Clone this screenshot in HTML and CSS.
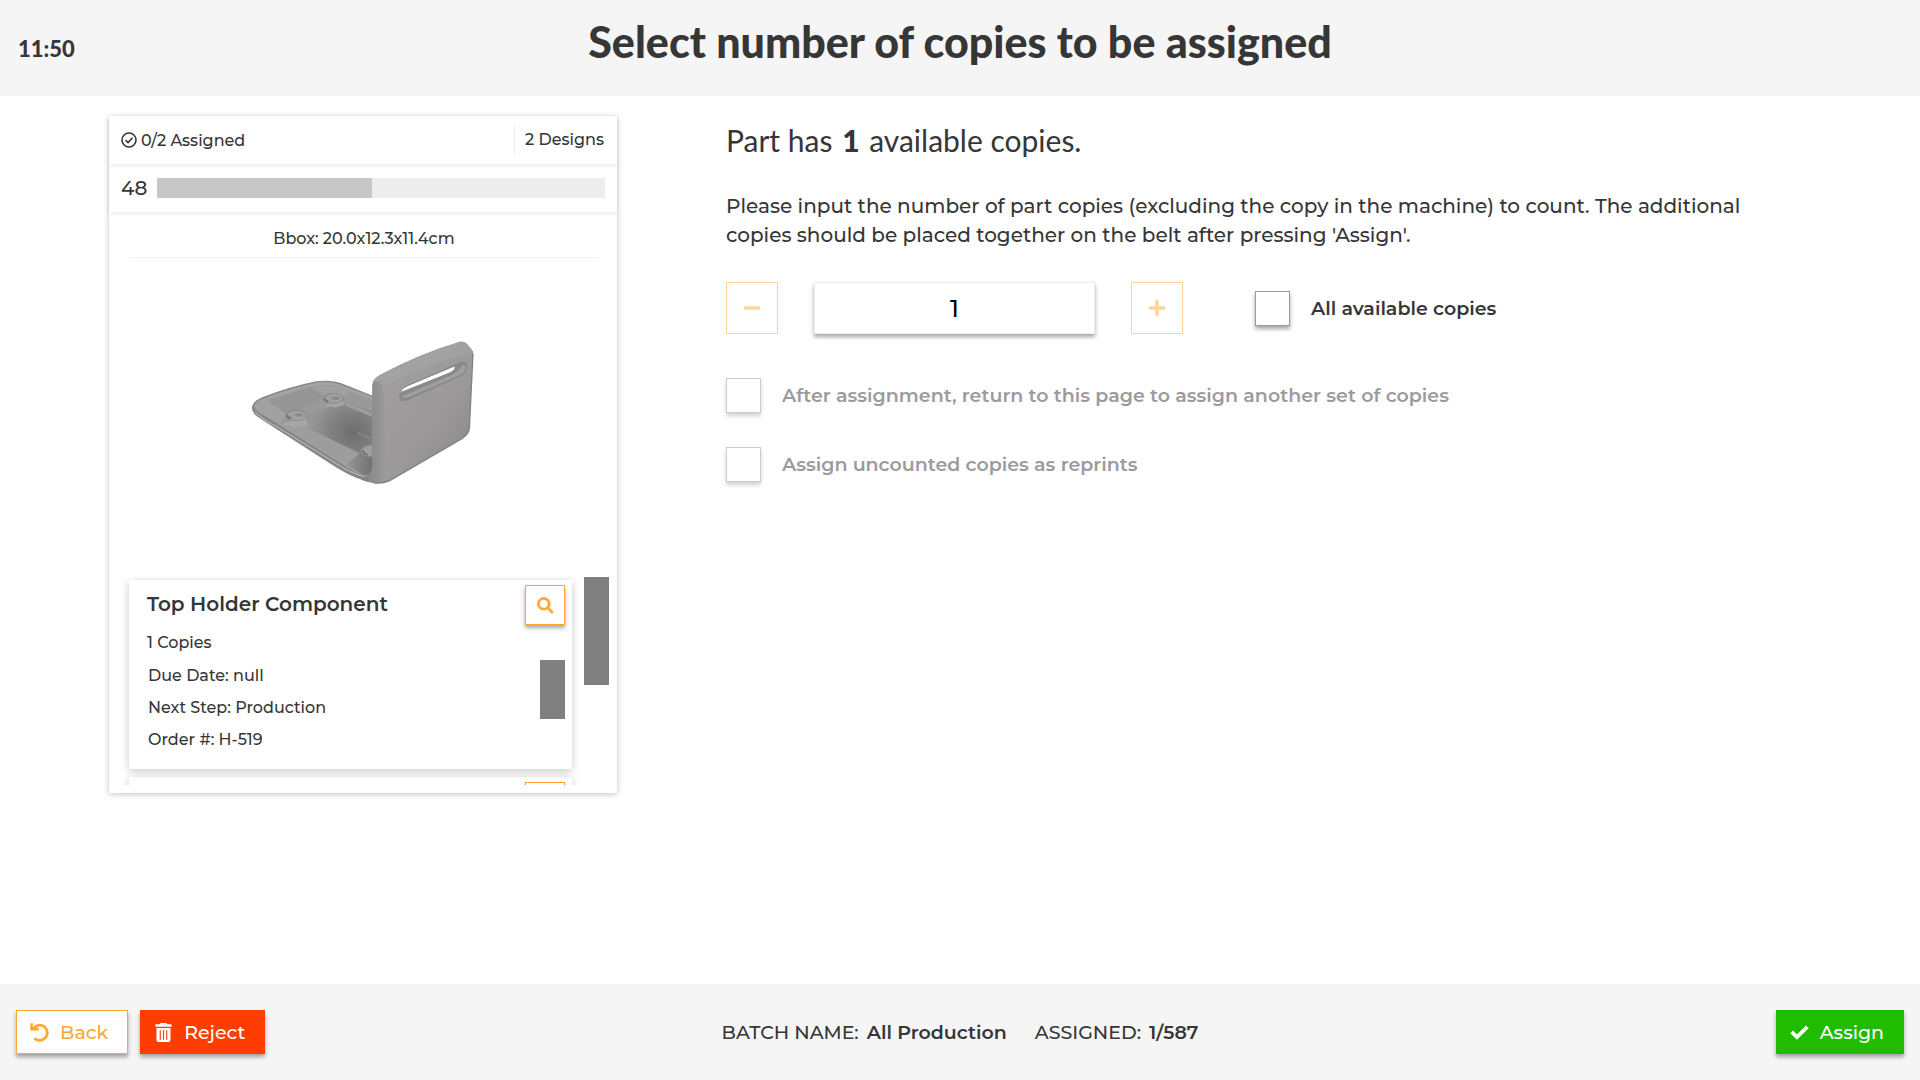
FILE: index.html
```html
<!DOCTYPE html>
<html lang="en">
  <head>
    <meta charset="UTF-8" />
    <meta name="viewport" content="width=device-width, initial-scale=1.0" />
    <title>Assign copies</title>
    <link rel="stylesheet" href="styles.css">
  </head>
  <body>
    <header class="header">
      <div class="clock">11:50</div>
      <h1 class="page-title">Select number of copies to be assigned</h1>
    </header>

    <main class="main">
      <section class="part-card">
        <div class="part-head">
          <div class="assigned">
            <svg class="check-icon" viewBox="0 0 16 16">
              <circle cx="8" cy="8" r="7" />
              <path d="M4.5 8.2 7 10.6 11.5 5.8" />
            </svg>
            <span>0/2 Assigned</span>
          </div>
          <div class="designs">2 Designs</div>
        </div>
        <div class="progress-row">
          <span>48</span>
          <div class="progress"><div class="progress-fill" style="width: 48%"></div></div>
        </div>
        <div class="part-body">
          <div class="bbox">Bbox: 20.0x12.3x11.4cm</div>
          <div class="preview">
            <svg class="preview-image" viewBox="0 0 800 540">
              <defs>
                <linearGradient id="face" x1="0" y1="0" x2="1" y2="1">
                  <stop offset="0" stop-color="#a3a1a1" />
                  <stop offset="0.6" stop-color="#9b9999" />
                  <stop offset="1" stop-color="#858383" />
                </linearGradient>
                <linearGradient id="bend" x1="0" x2="1">
                  <stop offset="0" stop-color="#7f7f7f" />
                  <stop offset="1" stop-color="#9c9a9a" />
                </linearGradient>
                <radialGradient id="shade" cx="0.72" cy="0.5" r="0.65">
                  <stop offset="0" stop-color="#6c6d6c" />
                  <stop offset="0.5" stop-color="#7f807f" />
                  <stop offset="1" stop-color="#979797" />
                </radialGradient>
                <linearGradient id="corner" x1="0" x2="1">
                  <stop offset="0" stop-color="#969696" />
                  <stop offset="1" stop-color="#6f706f" />
                </linearGradient>
              </defs>
              <!-- base plate -->
              <path fill="#858585" d="M67 262Q68 245 98 232Q180 200 260 184Q305 178 335 190L440 232V480L400 480Q360 470 300 430L90 295Q66 280 67 262Z" />
              <path fill="#a3a3a3" d="M74 258Q76 245 105 234Q190 202 265 187Q300 183 328 192L436 234V470Q400 470 370 452L110 290Q76 275 74 258Z" />
              <path fill="#999" d="M92 256Q150 225 240 201Q300 190 330 202L430 240V464L400 466L350 434L150 310Z" />
              <path fill="#a1a1a1" d="M110 240L170 282L150 312L84 268Z" />
              <path fill="#959595" d="M115 240L240 204L285 235L190 270L165 280Z" />
              <path fill="url(#shade)" d="M232 285L345 245L430 275V395L370 430L225 325Z" />
              <path fill="#a0a0a0" d="M245 203L325 194L360 213L340 232L285 225Z" />
              <path fill="#9d9d9d" d="M340 243L430 280V292L350 258ZM150 312L222 318L390 400L350 434Z" />
              <path fill="url(#corner)" d="M350 434L395 398H430V464L400 466Z" />
              <g fill="#9e9e9e" stroke="#868686" stroke-width="3">
                <path d="M170 290Q170 270 205 270Q234 275 232 293L215 303H178Z" />
                <path d="M283 238Q285 220 315 220Q342 225 342 240L322 251H292Z" />
                <path d="M428 374Q395 378 392 395Q400 410 428 411Z" />
              </g>
              <path fill="#a6a6a6" d="M178 303H215L232 295V318L200 322L160 314ZM292 251H322L342 242V256L318 262L286 258Z" />
              <g fill="#8b8b8b" stroke="#b2b2b2" stroke-width="2">
                <ellipse cx="207" cy="285" rx="15" ry="7" />
                <ellipse cx="317" cy="235" rx="15" ry="7" />
              </g>
              <path fill="none" stroke="#6b6b6b" stroke-width="5" d="M170 286Q176 294 184 296M284 236Q288 244 296 246M398 390Q402 402 414 404" />
              <path fill="none" stroke="#868786" stroke-width="5" d="M384 338L422 356" />
              <path fill="none" stroke="#adadad" stroke-width="4" d="M76 276Q100 300 145 322L330 437Q370 462 405 470" />
              <!-- upright plate with the handle slot cut out -->
              <path fill="url(#face)" fill-rule="evenodd" d="M428 195Q428 177 450 165Q570 100 690 65Q703 63 713 72L730 94V105L719 325Q718 342 698 355L480 482Q455 493 430 488Q405 487 390 475Q425 472 428 440ZM512 215Q516 204 535 197L672 141Q679 140 674 150Q668 155 655 160L530 209Q518 213 512 215Z" />
              <path fill="url(#bend)" d="M428 195Q440 176 460 178L468 440Q470 475 450 488Q410 490 390 475Q425 472 428 440Z" />
              <path fill="#ababab" d="M434 181Q570 104 690 65Q703 63 712 73L730 98L714 100Q580 140 463 201Q448 190 434 181Z" opacity="0.4" />
              <path fill="#8a8888" d="M508 228Q510 216 530 211L655 160Q678 150 676 137L700 126Q714 126 712 143Q711 162 690 170L540 238Q508 254 508 228Z" />
              <path fill="#a09e9e" d="M514 230L660 168Q690 154 700 132Q710 134 708 146Q704 160 686 167L540 230Q520 238 514 230Z" />
              <path fill="none" stroke="#828080" stroke-width="3" d="M512 215Q520 200 550 190L690 129Q708 125 712 140" />
              <path fill="none" stroke="#838181" stroke-width="4" d="M730 100L719 325Q718 342 698 355L480 482Q455 493 430 488" />
            </svg>
          </div>
          <div class="list-area">
            <div class="item-list">
              <article class="item">
                <div class="item-head">
                  <h2 class="item-title">Top Holder Component</h2>
                  <button class="search-button" aria-label="View Top Holder Component">
                    <svg viewBox="0 0 16 16"><circle cx="6.4" cy="6.4" r="5.1" /><path d="M10.3 10.3 14.8 14.8" /></svg>
                  </button>
                </div>
                <div class="copies">1 Copies</div>
                <div class="detail-area">
                  <ul class="details">
                    <li>Due Date: null</li>
                    <li>Next Step: Production</li>
                    <li>Order #: H-519</li>
                  </ul>
                  <div class="thumb thumb-small"></div>
                </div>
              </article>
              <article class="item">
                <div class="item-head">
                  <button class="search-button" aria-label="View next component">
                    <svg viewBox="0 0 16 16"><circle cx="6.4" cy="6.4" r="5.1" /><path d="M10.3 10.3 14.8 14.8" /></svg>
                  </button>
                </div>
              </article>
            </div>
            <div class="thumb"></div>
          </div>
        </div>
      </section>

      <section class="form">
        <h2 class="available">Part has <strong>1</strong> available copies.</h2>
        <p class="help">
          Please input the number of part copies (excluding the copy in the machine) to count. The additional
          copies should be placed together on the belt after pressing 'Assign'.
        </p>
        <div class="count-row">
          <button class="step-button" aria-label="Decrease" disabled>
            <svg viewBox="0 0 16 16"><path d="M2 8H14" /></svg>
          </button>
          <input class="count-input" type="text" value="1" aria-label="Number of copies" />
          <button class="step-button" aria-label="Increase" disabled>
            <svg viewBox="0 0 16 16"><path d="M2 8H14M8 2V14" /></svg>
          </button>
          <label class="check check-all"><input type="checkbox" />All available copies</label>
        </div>
        <label class="check disabled"><input type="checkbox" disabled />After assignment, return to this page to assign another set of copies</label>
        <label class="check disabled"><input type="checkbox" disabled />Assign uncounted copies as reprints</label>
      </section>
    </main>

    <footer class="footer">
      <div class="footer-left">
        <button class="button back">
          <svg viewBox="0 0 20 20"><path class="stroke" d="M3.4 6A8 8 0 1 1 4.6 16" /><path d="M0.3 0.3H3V5H9.2V8H0.3Z" /></svg>
          Back
        </button>
        <button class="button reject">
          <svg viewBox="0 0 20 20"><path fill-rule="evenodd" d="M1.5 1.4H6L7 0H13L14 1.4H18.5V4H1.5ZM2.6 5.2H17.4V18Q17.4 20 15.4 20H4.6Q2.6 20 2.6 18ZM6 7.5V17.5H7.2V7.5ZM9.4 7.5V17.5H10.6V7.5ZM12.8 7.5V17.5H14V7.5Z" /></svg>
          Reject
        </button>
      </div>
      <div class="batch">
        <span>BATCH NAME: <strong>All Production</strong></span>
        <span>ASSIGNED: <strong>1/587</strong></span>
      </div>
      <div class="footer-right">
        <button class="button assign">
          <svg viewBox="0 0 20 20"><path d="M0.4 10.8 3.2 8 7.3 12 16.8 2.6 19.6 5.4 7.3 17.6Z" /></svg>
          Assign
        </button>
      </div>
    </footer>
  </body>
</html>
```
FILE: styles.css
```css
* {
  box-sizing: border-box;
}
body {
  margin: 0;
  min-height: 100vh;
  display: flex;
  flex-direction: column;
  font-family: Montserrat, Inter, sans-serif;
  font-size: 16px;
  font-weight: 500;
  color: #363636;
  background: #fff;
}
button,
input {
  font-family: inherit;
  font-weight: 500;
}
h1,
h2,
p,
ul {
  margin: 0;
  padding: 0;
}
.header {
  height: 96px;
  padding: 0 18px;
  display: grid;
  grid-template-columns: 1fr auto 1fr;
  align-items: center;
  background: #f5f5f5;
}
.clock {
  font-family: Lato, sans-serif;
  font-size: 22px;
  font-weight: 900;
}
.page-title {
  font-family: Lato, sans-serif;
  font-size: 43px;
  line-height: 52px;
  font-weight: 900;
  padding-bottom: 12px;
}
.main {
  flex: 1;
  display: flex;
  align-items: flex-start;
  padding: 20px 109px;
}
.part-card {
  width: 508px;
  flex: none;
  box-shadow: 0 1px 6px rgba(0, 0, 0, 0.25);
}
.part-head {
  height: 48px;
  display: flex;
  align-items: center;
  justify-content: space-between;
  padding: 0 13px 0 12px;
  box-shadow: 0 2px 4px rgba(0, 0, 0, 0.08);
}
.assigned {
  display: flex;
  align-items: center;
  gap: 4px;
}
.check-icon {
  width: 16px;
  height: 16px;
  fill: none;
  stroke: #363636;
  stroke-width: 1.6;
}
.designs {
  line-height: 32px;
  padding-left: 10px;
  border-left: 1px solid #ededed;
}
.progress-row {
  height: 48px;
  display: flex;
  align-items: center;
  gap: 10px;
  padding: 0 12px;
  font-size: 20px;
  box-shadow: 0 2px 4px rgba(0, 0, 0, 0.08);
}
.progress {
  flex: 1;
  height: 20px;
  background: #ededed;
}
.progress-fill {
  height: 100%;
  background: #c7c7c7;
}
.part-body {
  padding: 8px 8px 8px 0;
}
.bbox {
  margin: 0 10px 0 20px;
  line-height: 37px;
  text-align: center;
  border-bottom: 1px solid #f2f2f2;
}
.preview {
  height: 319px;
  display: flex;
  justify-content: center;
  align-items: center;
  padding: 0 0 15px 8px;
}
.preview-image {
  width: 270px;
  height: 180px;
}
.list-area {
  display: flex;
  align-items: flex-start;
  justify-content: space-between;
}
.item-list {
  height: 208px;
  flex: 1;
  padding: 3px 12px 0 20px;
  overflow: hidden;
}
.item {
  height: 189px;
  margin-bottom: 8px;
  padding: 5px 7px 0 18px;
  box-shadow: 0 2px 8px rgba(0, 0, 0, 0.22);
}
.item-head {
  height: 40px;
  display: flex;
  justify-content: flex-end;
}
.item-title {
  flex: 1;
  font-size: 20px;
  line-height: 38px;
  font-weight: 600;
}
.search-button {
  width: 40px;
  height: 40px;
  padding: 0;
  display: flex;
  align-items: center;
  justify-content: center;
  background: #fff;
  border: 1px solid #ffa733;
  box-shadow: 0 3px 4px rgba(0, 0, 0, 0.35);
}
.search-button svg {
  width: 17px;
  height: 17px;
  fill: none;
  stroke: #ffa733;
  stroke-width: 2.6;
}
.copies {
  line-height: 35px;
}
.detail-area {
  display: flex;
  justify-content: space-between;
  align-items: flex-start;
}
.details {
  padding-left: 1px;
  list-style: none;
  line-height: 32px;
}
.thumb {
  width: 25px;
  height: 108px;
  background: #808080;
}
.thumb-small {
  height: 59px;
}
.form {
  flex: 1;
  max-width: 1040px;
  margin-left: 109px;
}
.available {
  font-family: Lato, sans-serif;
  font-size: 30px;
  line-height: 48px;
  font-weight: 400;
}
.available strong {
  font-weight: 900;
  margin: 0 2px;
}
.help {
  margin-top: 28px;
  font-size: 20px;
  line-height: 29px;
}
.count-row {
  display: flex;
  align-items: center;
  margin: 32px 0 44px;
}
.step-button {
  width: 52px;
  height: 52px;
  padding: 0;
  display: flex;
  align-items: center;
  justify-content: center;
  background: #fff;
  border: 1px solid #ffd399;
}
.step-button svg {
  width: 18px;
  height: 18px;
  fill: none;
  stroke: #ffd399;
  stroke-width: 3;
  stroke-linecap: round;
}
.count-input {
  width: 281px;
  height: 52px;
  margin: 0 36px;
  text-align: center;
  font-size: 24px;
  color: #000;
  border: 1px solid #ededed;
  box-shadow: 0 3px 4px rgba(0, 0, 0, 0.35);
}
.check {
  display: flex;
  align-items: center;
  gap: 21px;
  margin-bottom: 34px;
  font-size: 19px;
  font-weight: 600;
}
.check input {
  appearance: none;
  width: 35px;
  height: 35px;
  margin: 0;
  background: #fff;
  border: 1px solid #999;
  box-shadow: 0 3px 4px rgba(0, 0, 0, 0.35);
}
.check-all {
  margin: 0 0 0 72px;
}
.disabled {
  color: #9b9b9b;
}
.disabled input {
  border-color: #ccc;
  box-shadow: 0 3px 4px rgba(0, 0, 0, 0.18);
}
.footer {
  height: 96px;
  padding: 0 16px;
  display: grid;
  grid-template-columns: 1fr auto 1fr;
  align-items: center;
  background: #f5f5f5;
}
.footer-left,
.footer-right {
  display: flex;
  gap: 12px;
}
.footer-right {
  justify-content: flex-end;
}
.batch {
  display: flex;
  gap: 28px;
  font-size: 19px;
}
.batch strong {
  margin-left: 3px;
  font-weight: 600;
}
.button {
  height: 44px;
  padding: 0 19px 0 13px;
  display: flex;
  align-items: center;
  gap: 11px;
  font-size: 19px;
  color: #fff;
  border: 1px solid transparent;
  box-shadow: 0 3px 4px rgba(0, 0, 0, 0.35);
}
.button svg {
  width: 19px;
  height: 19px;
  fill: currentColor;
}
.button .stroke {
  fill: none;
  stroke: currentColor;
  stroke-width: 3;
}
.back {
  color: #ffa733;
  background: #fff;
  border-color: #ffa733;
}
.reject {
  background: #ff3d00;
  border-color: #ff3d00;
}
.assign {
  background: #1fbc00;
  border-color: #1fbc00;
}
```
